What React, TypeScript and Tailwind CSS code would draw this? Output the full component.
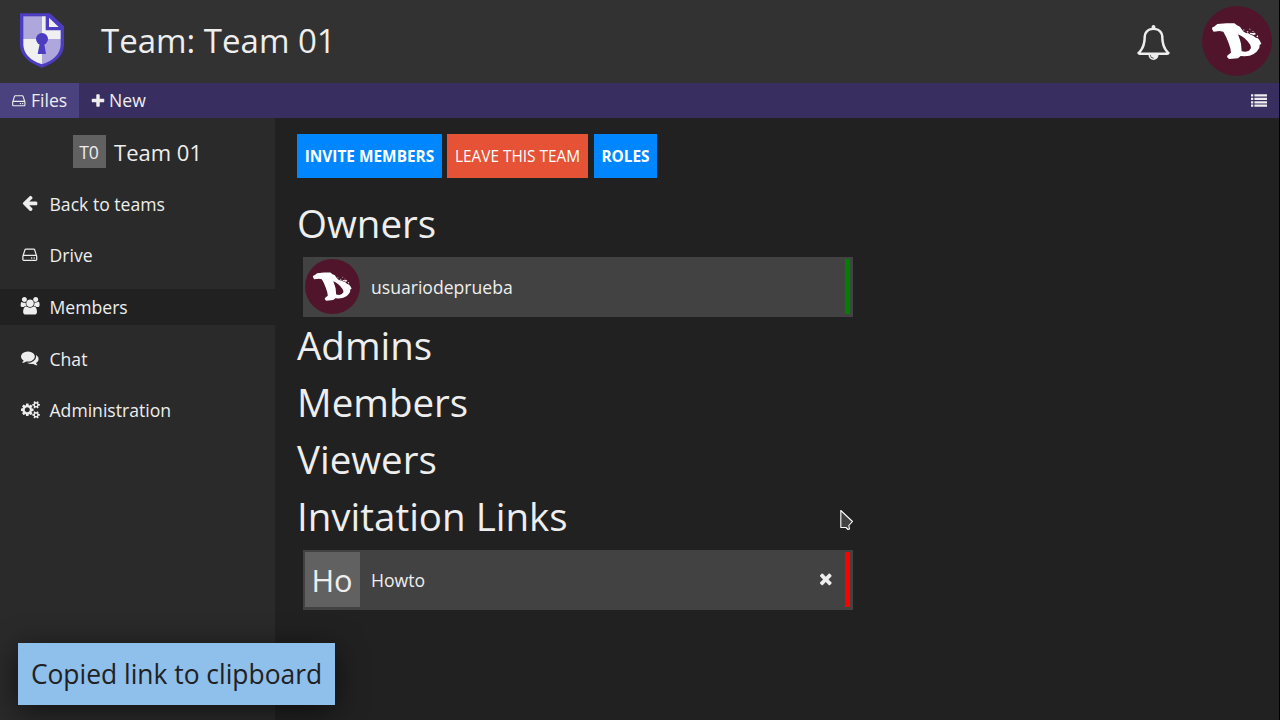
import type { ReactNode } from "react";

const PATHS = {
  hdd: "M1168 1216q0 33-23.5 56.5t-56.5 23.5-56.5-23.5-23.5-56.5 23.5-56.5 56.5-23.5 56.5 23.5 23.5 56.5zm256 0q0 33-23.5 56.5t-56.5 23.5-56.5-23.5-23.5-56.5 23.5-56.5 56.5-23.5 56.5 23.5 23.5 56.5zm112 160v-320q0-13-9.5-22.5t-22.5-9.5h-1216q-13 0-22.5 9.5t-9.5 22.5v320q0 13 9.5 22.5t22.5 9.5h1216q13 0 22.5-9.5t9.5-22.5zm-1230-480h1180l-157-482q-4-13-16-21.5t-26-8.5h-782q-14 0-26 8.5t-16 21.5zm1358 160v320q0 66-47 113t-113 47h-1216q-66 0-113-47t-47-113v-320q0-25 16-75l197-606q17-53 63-86t101-33h782q55 0 101 33t63 86l197 606q16 50 16 75z",
  bell: "M912 1696q0-16-16-16-59 0-101.500-42.500t-42.500-101.500q0-16-16-16t-16 16q0 73 51.500 124.500t124.500 51.500q16 0 16-16zm-666-288h1300q-266-300-266-832 0-51-24-105t-69-103-121.500-80.500-169.500-31.500-169.500 31.500-121.500 80.500-69 103-24 105q0 532-266 832zm1482 0q0 52-38 90t-90 38h-448q0 106-75 181t-181 75-181-75-75-181h-448q-52 0-90-38t-38-90q50-42 91-88t85-119.500 74.500-158.500 50-206 19.500-260q0-152 117-282.500t307-158.500q-8-19-8-39 0-40 28-68t68-28 68 28 28 68q0 20-8 39 190 28 307 158.500t117 282.500q0 139 19.500 260t50 206 74.500 158.500 85 119.500 91 88z",
  plus: "M1600 736v192q0 40-28 68t-68 28h-416v416q0 40-28 68t-68 28h-192q-40 0-68-28t-28-68v-416h-416q-40 0-68-28t-28-68v-192q0-40 28-68t68-28h416v-416q0-40 28-68t68-28h192q40 0 68 28t28 68v416h416q40 0 68 28t28 68z",
  times: "M1490 1322q0 40-28 68l-136 136q-28 28-68 28t-68-28l-294-294-294 294q-28 28-68 28t-68-28l-136-136q-28-28-28-68t28-68l294-294-294-294q-28-28-28-68t28-68l136-136q28-28 68-28t68 28l294 294 294-294q28-28 68-28t68 28l136 136q28 28 28 68t-28 68l-294 294 294 294q28 28 28 68z",
  arrowLeft: "M1664 896v128q0 53-32.500 90.500t-84.500 37.500h-704l293 294q38 36 38 90t-38 90l-75 76q-37 37-90 37-52 0-91-37l-651-652q-37-37-37-90 0-52 37-91l651-650q38-38 91-38 52 0 90 38l75 74q38 38 38 91t-38 91l-293 293h704q52 0 84.500 37.500t32.500 90.500z",
  users: "M657 896q-162 5-265 128h-134q-82 0-138-40.500t-56-118.500q0-353 124-353 6 0 43.500 21t97.500 42.500 119 21.500q67 0 133-23-5 37-5 66 0 159 93 293zm1071 637q0 120-73 189.500t-194 69.500h-874q-121 0-194-69.500t-73-189.500q0-53 3.500-103.500t14-109 26.500-108.500 43-97.500 62-81 85.500-53.500 111.500-20q10 0 43 21.500t73 48 107 48 135 21.500 135-21.500 107-48 73-48 43-21.500q61 0 111.500 20t85.500 53.500 62 81 43 97.500 26.500 108.500 14 109 3.500 103.500zm-1024-1277q0 106-75 181t-181 75-181-75-75-181 75-181 181-75 181 75 75 181zm704 384q0 159-112.500 271.500t-271.500 112.500-271.500-112.500-112.500-271.500 112.500-271.500 271.500-112.500 271.500 112.500 112.500 271.500zm576 225q0 78-56 118.500t-138 40.500h-134q-103-123-265-128 93-134 93-293 0-29-5-66 66 23 133 23 59 0 119-21.500t97.500-42.500 43.500-21q124 0 124 353zm-128-609q0 106-75 181t-181 75-181-75-75-181 75-181 181-75 181 75 75 181z",
  comments: "M1408 768q0 139-94 257t-256.500 186.500-353.500 68.500q-86 0-176-16-124 88-278 128-36 9-86 16h-3q-11 0-20.500-8t-11.500-21q-1-3-1-6.500t.5-6.500 2-6l2.500-5 3.500-5.500 4-5 4.500-5 4-4.500q5-6 23-25t26-29.500 22.500-29 25-38.500 20.500-44q-124-72-195-177t-71-224q0-139 94-257t256.500-186.500 353.500-68.500 353.500 68.500 256.500 186.500 94 257zm384 256q0 120-71 224.500t-195 176.500q10 24 20.500 44t25 38.500 22.500 29 26 29.500 23 25q1 1 4 4.500t4.500 5 4 5 3.500 5.500l2.500 5 2 6 .5 6.500-1 6.500q-3 14-13 22t-22 7q-50-7-86-16-154-40-278-128-90 16-176 16-271 0-472-132 58 4 88 4 161 0 309-45t264-129q125-92 192-212t67-254q0-77-23-152 129 71 204 178t75 230z",
  cog: "M896 896q0-106-75-181t-181-75-181 75-75 181 75 181 181 75 181-75 75-181zm384-91v185q0 10-7 19.500t-16 10.500l-155 24q-11 35-32 76 34 48 90 115 7 11 7 20 0 12-7 19-23 30-82.500 89.500t-78.500 59.500q-11 0-21-7l-115-90q-37 19-77 31-11 108-23 155-7 24-30 24h-186q-11 0-20-7.500t-10-17.500l-23-153q-34-10-75-31l-118 89q-7 7-20 7-11 0-21-8-144-133-144-160 0-9 7-19 10-14 41-53t47-61q-23-44-35-82l-152-24q-10-1-17-9.500t-7-19.500v-185q0-10 7-19.500t16-10.500l155-24q11-35 32-76-34-48-90-115-7-11-7-20 0-12 7-20 22-30 82-89t79-59q11 0 21 7l115 90q34-18 77-32 11-108 23-154 7-24 30-24h186q11 0 20 7.500t10 17.500l23 153q34 10 75 31l118-89q8-7 20-7 11 0 21 8 144 133 144 160 0 8-7 19-12 16-42 54t-45 60q23 48 34 82l152 23q10 2 17 10.500t7 19.500z",
  smallCog: "M1664 1408q0-52-38-90t-90-38-90 38-38 90q0 53 37.500 90.500t90.500 37.500 90.500-37.500 37.500-90.500zm256-70v140q0 16-149 31-12 27-30 52 51 113 51 138 0 4-4 7-122 71-124 71-8 0-46-47t-52-68q-20 2-30 2t-30-2q-14 21-52 68t-46 47q-2 0-124-71-4-3-4-7 0-25 51-138-18-25-30-52-149-15-149-31v-140q0-16 149-31 13-29 30-52-51-113-51-138 0-4 4-7 4-2 35-20t59-34 30-16q8 0 46 46.500t52 67.500q20-2 30-2t30 2q51-71 92-112l6-2q4 0 124 70 4 3 4 7 0 25-51 138 17 23 30 52 149 15 149 31z",
};

type IconProps = { size: number; d?: string; width?: number; children?: ReactNode };

function Icon({ size, d, width = 1792, children }: IconProps) {
  return (
    <svg
      width={(size * width) / 1792}
      height={size}
      viewBox={`0 0 ${width} 1792`}
      fill="currentColor"
      className="shrink-0 overflow-visible"
      aria-hidden="true"
    >
      {d && <path d={d} />}
      {children}
    </svg>
  );
}

function CogsIcon() {
  return (
    <Icon size={17.6} width={1920} d={PATHS.cog}>
      <path d={PATHS.smallCog} />
      <path d={PATHS.smallCog} transform="translate(0 -1024)" />
    </Icon>
  );
}

function Logo() {
  return (
    <svg width="44" height="55" viewBox="60 38 132 165" className="shrink-0" aria-hidden="true">
      <path d="M60 39H150L192 78V135Q190 180 126 202Q62 180 60 135Z" fill="#4b3cc0" />
      <path d="M70 48H126V116H70Z" fill="#ada7db" />
      <path d="M126 48H137V90H182V116H126Z" fill="#f0f0f0" />
      <path d="M70 116H126V192Q72 174 70 134Z" fill="#f0f0f0" />
      <path d="M126 116H182V134Q180 174 126 192Z" fill="#ada7db" />
      <path d="M147 52L176 80H147Z" fill="#f0f0f0" />
      <circle cx="126" cy="116" r="18" fill="#4b3cc0" />
      <path d="M120 126H132L138 161H113Z" fill="#4b3cc0" />
    </svg>
  );
}

function Avatar({ size }: { size: number }) {
  return (
    <svg width={size} height={size} viewBox="22 17 210 210" className="shrink-0" aria-hidden="true">
      <circle cx="127" cy="122" r="105" fill="#51152b" />
      <path
        d="M53 88L52 82L60 78L68 71L95 69L119 69L127 75L136 79L141 87L147 94L154 98L161 99L168 103L176 106L183 112L190 114L196 122L200 131L195 133L194 143L186 154L177 161L165 166L150 168L138 167L130 174L103 176L97 170L99 165L109 157L107 144L101 126L94 109L86 94L75 92L57 94ZM130 102L136 119L139 130L141 153L153 154L163 151L169 143L167 134L158 122L149 113L140 107Z"
        fill="#fff"
        fillRule="evenodd"
      />
      <path d="M146 86l4 3-3 2zM156 92l6 2-4 3zM165 84l3 3-3 2zM165 97l8 1 7-1 4 4-6 3-11-3zM173 91l5 3-4 1zM188 105l3 3-2 3-4-2z" fill="#fff" />
    </svg>
  );
}

type NavItem = { label: string; icon: ReactNode; active?: boolean };

const NAV: NavItem[] = [
  { label: "Back to teams", icon: <Icon size={17.6} d={PATHS.arrowLeft} /> },
  { label: "Drive", icon: <Icon size={17.6} d={PATHS.hdd} /> },
  { label: "Members", icon: <Icon size={17.6} width={2048} d={PATHS.users} />, active: true },
  { label: "Chat", icon: <Icon size={17.6} d={PATHS.comments} /> },
  { label: "Administration", icon: <CogsIcon /> },
];

function Heading({ children }: { children: ReactNode }) {
  return <h2 className="h-[57px] text-[38.5px] leading-[56px]">{children}</h2>;
}

function MemberCard({ avatar, name, action, status }: { avatar: ReactNode; name: string; action?: ReactNode; status: string }) {
  return (
    <div className="mt-[5px] ml-[6px] flex h-[60px] w-[550px] items-start bg-[#424242] pt-[2px] pr-[3px] pl-[2px]">
      {avatar}
      <span className="ml-[11px] flex-1 text-[17.6px] leading-[56px]">{name}</span>
      {action}
      <span className={`h-[55px] w-[5px] ${status}`} />
    </div>
  );
}

export default function App() {
  return (
    <div className="relative flex h-[720px] w-[1280px] flex-col overflow-hidden border-r border-black bg-[#212121] font-['Open_Sans',sans-serif] text-[#eeeeee]">
      <header className="flex h-[83px] shrink-0 items-center bg-[#323232] pr-[7px] pl-5">
        <div className="pb-[3px]">
          <Logo />
        </div>
        <h1 className="ml-[37px] flex-1 pb-[3px] text-[33px] leading-none">Team: Team 01</h1>
        <div className="mr-[31px] pt-[2px]">
          <Icon size={35} d={PATHS.bell} />
        </div>
        <div className="pb-px">
          <Avatar size={70} />
        </div>
      </header>

      <nav className="flex h-[35px] shrink-0 items-center bg-[#382f60] text-[17.6px]">
        <button className="flex h-full w-[79px] items-center bg-[#4a417f] pl-[11px]">
          <Icon size={15.6} d={PATHS.hdd} />
          <span className="ml-[4.400px]">Files</span>
        </button>
        <button className="flex h-full items-center pl-[10.500px]">
          <Icon size={16} d={PATHS.plus} />
          <span className="ml-[3.500px]">New</span>
        </button>
        <div className="mr-[12px] ml-auto pb-[2px]">
          <Icon size={16}>
            <path d="M0 256h256v256H0zM384 256h1408v256H384zM0 640h256v256H0zM384 640h1408v256H384zM0 1024h256v256H0zM384 1024h1408v256H384zM0 1408h256v256H0zM384 1408h1408v256H384z" />
          </Icon>
        </div>
      </nav>

      <div className="flex min-h-0 flex-1">
        <aside className="w-[275px] bg-[#2a2a2a]">
          <div className="mt-[17px] flex h-[33px] items-center justify-center">
            <span className="flex size-[33px] items-center justify-center bg-[#616161] pt-px pr-px text-[17.6px]">T0</span>
            <span className="ml-2 pt-[2px] text-[22px]">Team 01</span>
          </div>
          <ul className="mt-[18px] flex flex-col gap-[15.6px]">
            {NAV.map((item) => (
              <li
                key={item.label}
                className={item.active ? "flex h-9 items-center bg-[#212121] pl-5" : "flex h-9 items-center pl-5"}
              >
                <span className="flex w-5 justify-center pb-[2px]">{item.icon}</span>
                <span className="ml-[9.500px] text-[17.6px]">{item.label}</span>
              </li>
            ))}
          </ul>
        </aside>

        <main className="flex-1 pt-4 pl-[22px]">
          <div className="mb-[17px] flex h-11 text-[15.4px] text-white">
            <button className="w-[145px] bg-[#0087ff] pt-[2px] font-bold whitespace-nowrap">INVITE MEMBERS</button>
            <button className="ml-[5px] w-[141px] bg-[#e55236] pt-[2px] whitespace-nowrap">LEAVE THIS TEAM</button>
            <button className="ml-[6px] w-[63px] bg-[#0087ff] pt-[2px] font-bold whitespace-nowrap">ROLES</button>
          </div>
          <Heading>Owners</Heading>
          <MemberCard avatar={<Avatar size={55} />} name="usuariodeprueba" status="bg-[#008000]" />
          <Heading>Admins</Heading>
          <Heading>Members</Heading>
          <Heading>Viewers</Heading>
          <Heading>Invitation Links</Heading>
          <MemberCard
            avatar={<span className="flex size-[55px] items-center justify-center bg-[#616161] pt-[2px] pr-px text-[30.8px]">Ho</span>}
            name="Howto"
            action={
              <button className="mr-[10px] flex h-[54px] items-center">
                <Icon size={17.6} d={PATHS.times} />
              </button>
            }
            status="bg-[#ff0000]"
          />
        </main>
      </div>

      <div className="absolute top-[643px] left-[18px] flex h-[62px] w-[317px] items-center justify-center bg-[#8fbfeb] pt-[2px] text-[26.4px] whitespace-nowrap text-[#212121] shadow-[0_6px_30px_rgba(0,0,0,0.6)]">
        Copied link to clipboard
      </div>

      <svg width="14" height="22" viewBox="0 0 14 22" className="absolute top-[509px] left-[840px]" aria-hidden="true">
        <path d="M.8 1.5V18.500H6L8 20.500L9.500 20L8.800 16.500L12.500 12.500Z" fill="#424242" stroke="#fff" strokeWidth="1.100" strokeLinejoin="round" />
      </svg>
    </div>
  );
}
